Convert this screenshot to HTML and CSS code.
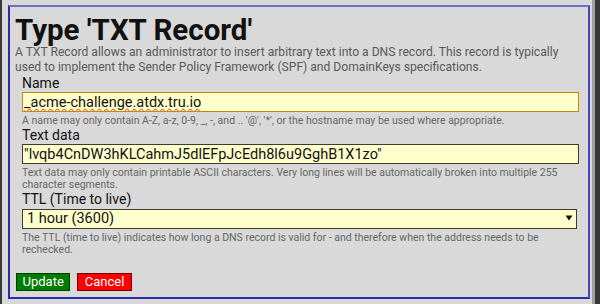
FILE: index.html
```html
<!DOCTYPE html>
<html>
<head>
<meta charset="utf-8">
<link rel="stylesheet" href="styles.css">
</head>
<body>
<div class="screen">
  <div class="edge-left"></div>
  <div class="stage">
    <div class="dialog">
      <h1 class="title">Type 'TXT Record'</h1>
      <p class="intro">A TXT Record allows an administrator to insert arbitrary text into a DNS record. This record is typically used to implement the Sender Policy Framework (SPF) and DomainKeys specifications.</p>
      <div class="fields">
        <label class="label" for="name">Name</label>
        <input id="name" class="input input-focus" type="text" value="_acme-challenge.atdx.tru.io">
        <div class="hint">A name may only contain A-Z, a-z, 0-9, _, -, and .. '@', '*', or the hostname may be used where appropriate.</div>
        <label class="label" for="txt">Text data</label>
        <input id="txt" class="input" type="text" value="&quot;lvqb4CnDW3hKLCahmJ5dlEFpJcEdh8l6u9GghB1X1zo&quot;">
        <div class="hint">Text data may only contain printable ASCII characters. Very long lines will be automatically broken into multiple 255 character segments.</div>
        <label class="label" for="ttl">TTL (Time to live)</label>
        <div class="select-wrap">
          <select id="ttl" class="select">
            <option>1 hour (3600)</option>
          </select>
          <svg class="arrow" width="8" height="6" viewBox="0 0 8 6"><path d="M0.5 0.5 H7.5 L4 5.5 Z" fill="#111"/></svg>
        </div>
        <div class="hint">The TTL (time to live) indicates how long a DNS record is valid for - and therefore when the address needs to be rechecked.</div>
      </div>
      <div class="actions">
        <button class="btn btn-ok">Update</button>
        <button class="btn btn-cancel">Cancel</button>
      </div>
    </div>
  </div>
  <div class="scroll"></div>
</div>
</body>
</html>
```
FILE: styles.css
```css
html, body {
  margin: 0;
  padding: 0;
  background: #d9d9d9;
  font-family: Roboto, "Liberation Sans", sans-serif;
}
.screen {
  display: flex;
  width: 600px;
  height: 304px;
  overflow: hidden;
}
.edge-left {
  width: 2px;
  background: #3a3a3a;
}
.stage {
  flex: 1;
  display: flex;
  flex-direction: column;
  padding: 5px 2px 5px 6px;
}
.scroll {
  width: 5px;
  border-left: 3px solid #a0a0a0;
  background: #383838;
}
.dialog {
  flex: 1;
  border-style: solid;
  border-width: 2px;
  border-color: #6e6ec6 #4646c0 #2a2ab0 #2c2ca6;
  background: #d9d9d9;
  padding: 8px 5px 0 5px;
}
.title {
  margin: 0;
  font-size: 29.5px;
  line-height: 30px;
  font-weight: 700;
  color: #111;
}
.intro {
  margin: 0;
  font-size: 12.1px;
  line-height: 15px;
  color: #585858;
}
.fields {
  display: flex;
  flex-direction: column;
  margin: 0 4px 0 7px;
}
.label {
  font-size: 14px;
  line-height: 17px;
  color: #111;
}
.input {
  box-sizing: border-box;
  height: 20px;
  margin: 0;
  padding: 0 1px;
  font-family: Roboto, "Liberation Sans", sans-serif;
  font-size: 14.5px;
  color: #111;
  background: #ffffcc;
  border: 1px solid #3c3c30;
  outline: none;
}
.input-focus {
  border-color: #c8860c;
  text-decoration: underline wavy #e03030;
  text-decoration-thickness: 1px;
}
.hint {
  margin-top: 3px;
  font-size: 10.5px;
  line-height: 12px;
  color: #666;
}
.select-wrap {
  position: relative;
  margin-right: 2px;
}
.select {
  box-sizing: border-box;
  width: 100%;
  height: 20px;
  margin: 0;
  padding: 0 4px;
  appearance: none;
  -webkit-appearance: none;
  font-family: Roboto, "Liberation Sans", sans-serif;
  font-size: 14.5px;
  color: #111;
  background: #ffffcc;
  border: 1px solid #3c3c30;
  border-radius: 0;
  outline: none;
}
.arrow {
  position: absolute;
  right: 4px;
  top: 7px;
}
.actions {
  display: flex;
  gap: 7px;
  margin: 17px 0 0 1px;
}
.btn {
  box-sizing: border-box;
  height: 18px;
  padding: 0 5.5px;
  font-family: Roboto, "Liberation Sans", sans-serif;
  font-size: 13px;
  line-height: 14px;
  color: #fff;
  border: 1px solid;
  border-radius: 0;
}
.btn-ok {
  background: #007c00;
  border-color: #003c00;
}
.btn-cancel {
  background: #ff0000;
  border-color: #700000;
  padding: 0 6.5px;
}
```
